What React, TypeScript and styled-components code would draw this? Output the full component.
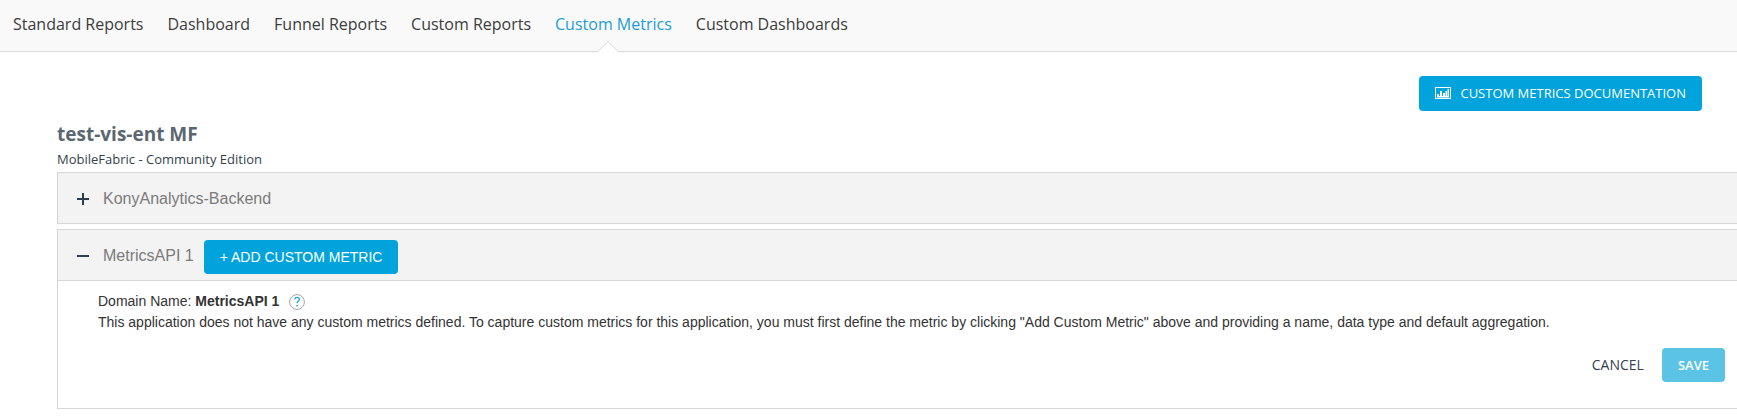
import React from "react";
import styled, { createGlobalStyle } from "styled-components";

const humanist = `"Open Sans", "Noto Sans", sans-serif`;
const grotesque = `"Liberation Sans", Arial, sans-serif`;

const GlobalStyle = createGlobalStyle`
  *, *::before, *::after { box-sizing: border-box; }
  body { margin: 0; background: #fff; color: #333; font-family: ${grotesque}; overflow-x: hidden; }
  button { font: inherit; cursor: pointer; }
  h1, h2, p { margin: 0; font-weight: 400; }
`;

const NavBar = styled.nav`
  display: flex;
  gap: 24px;
  height: 52px;
  padding: 0 13px;
  background: #f9f9f9;
  border-bottom: 1px solid #d9d9d9;
`;

const NavLink = styled.a<{ $active?: boolean }>`
  position: relative;
  padding-top: 12px;
  font: 400 16px/24px ${humanist};
  white-space: nowrap;
  text-decoration: none;
  color: ${(p) => (p.$active ? "#1b9dd9" : "#3c3c3c")};
`;

const Pointer = styled.svg`
  position: absolute;
  left: 50%;
  bottom: -1px;
  margin-left: -16px;
`;

const Main = styled.main`
  padding: 24px 0 8px 57px;
`;

const Toolbar = styled.div`
  display: flex;
  justify-content: flex-end;
  padding-right: 35px;
`;

const PrimaryButton = styled.button<{ $faded?: boolean; $font?: string }>`
  display: inline-flex;
  align-items: center;
  gap: 9px;
  height: 34px;
  padding: 0 16px;
  border: 0;
  border-radius: 4px;
  background: ${(p) => (p.$faded ? "#5bc3e6" : "#00a3db")};
  color: #fff;
  font: 400 14px/20px ${(p) => p.$font ?? humanist};
  white-space: nowrap;
`;

const DocButton = styled(PrimaryButton)`
  height: 35px;
  padding-bottom: 1px;
  font-size: 13px;
`;

const SaveButton = styled(PrimaryButton)`
  padding-bottom: 1px;
  font-size: 13px;
  font-weight: 600;
`;

const AppName = styled.h1`
  margin-top: 11px;
  font: 700 19px/24px ${humanist};
  color: #5b6770;
`;

const Edition = styled.p`
  margin-top: 1px;
  font: 400 13px/24px ${humanist};
  color: #333f4f;
`;

const Panels = styled.div`
  display: grid;
  gap: 5px;
  margin: 1px -2px 0 0;
`;

const Panel = styled.section`
  border: 1px solid #d6d6d6;
`;

const PanelHeader = styled.header`
  display: flex;
  align-items: center;
  height: 50px;
  padding: 2px 0 0 16px;
  background: #f3f3f3;
`;

const Toggle = styled.button`
  display: flex;
  padding: 3px;
  border: 0;
  background: none;
  color: #2f3e4f;
`;

const PanelTitle = styled.h2`
  margin: 0 10px 0 11px;
  font: 400 16px/24px ${grotesque};
  color: #7b7b7b;
`;

const AddButton = styled(PrimaryButton)`
  margin-top: 2px;
`;

const PanelBody = styled.div`
  padding: 10px 13px 26px 40px;
  border-top: 1px solid #d6d6d6;
  font: 400 14px/21px ${grotesque};
  color: #333;
`;

const DomainLine = styled.p`
  display: flex;
  align-items: center;
  white-space: pre;
`;

const HelpButton = styled.button`
  display: flex;
  margin-left: 10px;
  padding: 0;
  border: 0;
  background: none;
`;

const Actions = styled.div`
  display: flex;
  justify-content: flex-end;
  gap: 18px;
  margin-top: 15px;
`;

const CancelButton = styled.button`
  padding: 0;
  border: 0;
  background: none;
  color: #333f4f;
  font: 400 14px/34px ${humanist};
`;

const navItems = [
  "Standard Reports",
  "Dashboard",
  "Funnel Reports",
  "Custom Reports",
  "Custom Metrics",
  "Custom Dashboards",
];

function ChartIcon() {
  return (
    <svg width="16" height="12" viewBox="0 0 16 12" aria-hidden="true">
      <rect x="0.5" y="0.5" width="15" height="11" fill="none" stroke="#fff" />
      <path d="M2 7h2v3H2zM5 4h2v6H5zM8 6h2v4H8zM10.500 4h1.500v6h-1.500zM12.500 2h1.500v8h-1.500z" fill="#fff" />
      <path d="M2 9h12v1.500H2z" fill="#fff" />
    </svg>
  );
}

function ToggleIcon({ open }: { open?: boolean }) {
  return (
    <svg width="12" height="12" viewBox="0 0 12 12" aria-hidden="true">
      <path d={open ? "M0 5h12v2H0z" : "M0 5h5V0h2v5h5v2H7v5H5V7H0z"} fill="currentColor" />
    </svg>
  );
}

function HelpIcon() {
  return (
    <svg width="16" height="16" viewBox="0 0 16 16" fill="none" aria-hidden="true">
      <circle cx="8" cy="8" r="7.4" stroke="#a3a3a3" />
      <path
        d="M5.700 5.300C5.900 4 6.800 3.400 8 3.400c1.400 0 2.400.8 2.400 2 0 1.800-2.300 2-2.300 3.900"
        stroke="#1ba8dd"
        strokeWidth="1.300"
      />
      <path d="M7.300 10.900h1.500v1.500H7.300z" fill="#1ba8dd" />
    </svg>
  );
}

export default function App() {
  return (
    <>
      <GlobalStyle />
      <NavBar aria-label="Reports">
        {navItems.map((item) => {
          const active = item === "Custom Metrics";
          return (
            <NavLink key={item} href="#" $active={active} aria-current={active ? "page" : undefined}>
              {item}
              {active && (
                <Pointer width="22" height="11" viewBox="0 0 22 11" aria-hidden="true">
                  <path d="M0.500 11 11 0.500 21.500 11z" fill="#fff" />
                  <path d="M0.500 10.800 11 0.700 21.500 10.800" fill="none" stroke="#d9d9d9" />
                </Pointer>
              )}
            </NavLink>
          );
        })}
      </NavBar>
      <Main>
        <Toolbar>
          <DocButton type="button">
            <ChartIcon />
            CUSTOM METRICS DOCUMENTATION
          </DocButton>
        </Toolbar>
        <AppName>test-vis-ent MF</AppName>
        <Edition>MobileFabric - Community Edition</Edition>
        <Panels>
          <Panel>
            <PanelHeader>
              <Toggle type="button" aria-label="Expand KonyAnalytics-Backend" aria-expanded={false}>
                <ToggleIcon />
              </Toggle>
              <PanelTitle>KonyAnalytics-Backend</PanelTitle>
            </PanelHeader>
          </Panel>
          <Panel>
            <PanelHeader>
              <Toggle type="button" aria-label="Collapse MetricsAPI 1" aria-expanded>
                <ToggleIcon open />
              </Toggle>
              <PanelTitle>MetricsAPI 1</PanelTitle>
              <AddButton type="button" $font={grotesque}>
                + ADD CUSTOM METRIC
              </AddButton>
            </PanelHeader>
            <PanelBody>
              <DomainLine>
                Domain Name: <strong>MetricsAPI 1</strong>
                <HelpButton type="button" aria-label="About the domain name">
                  <HelpIcon />
                </HelpButton>
              </DomainLine>
              <p>
                This application does not have any custom metrics defined. To capture custom metrics for this
                application, you must first define the metric by clicking "Add Custom Metric" above and providing a
                name, data type and default aggregation.
              </p>
              <Actions>
                <CancelButton type="button">CANCEL</CancelButton>
                <SaveButton type="button" $faded>
                  SAVE
                </SaveButton>
              </Actions>
            </PanelBody>
          </Panel>
        </Panels>
      </Main>
    </>
  );
}
